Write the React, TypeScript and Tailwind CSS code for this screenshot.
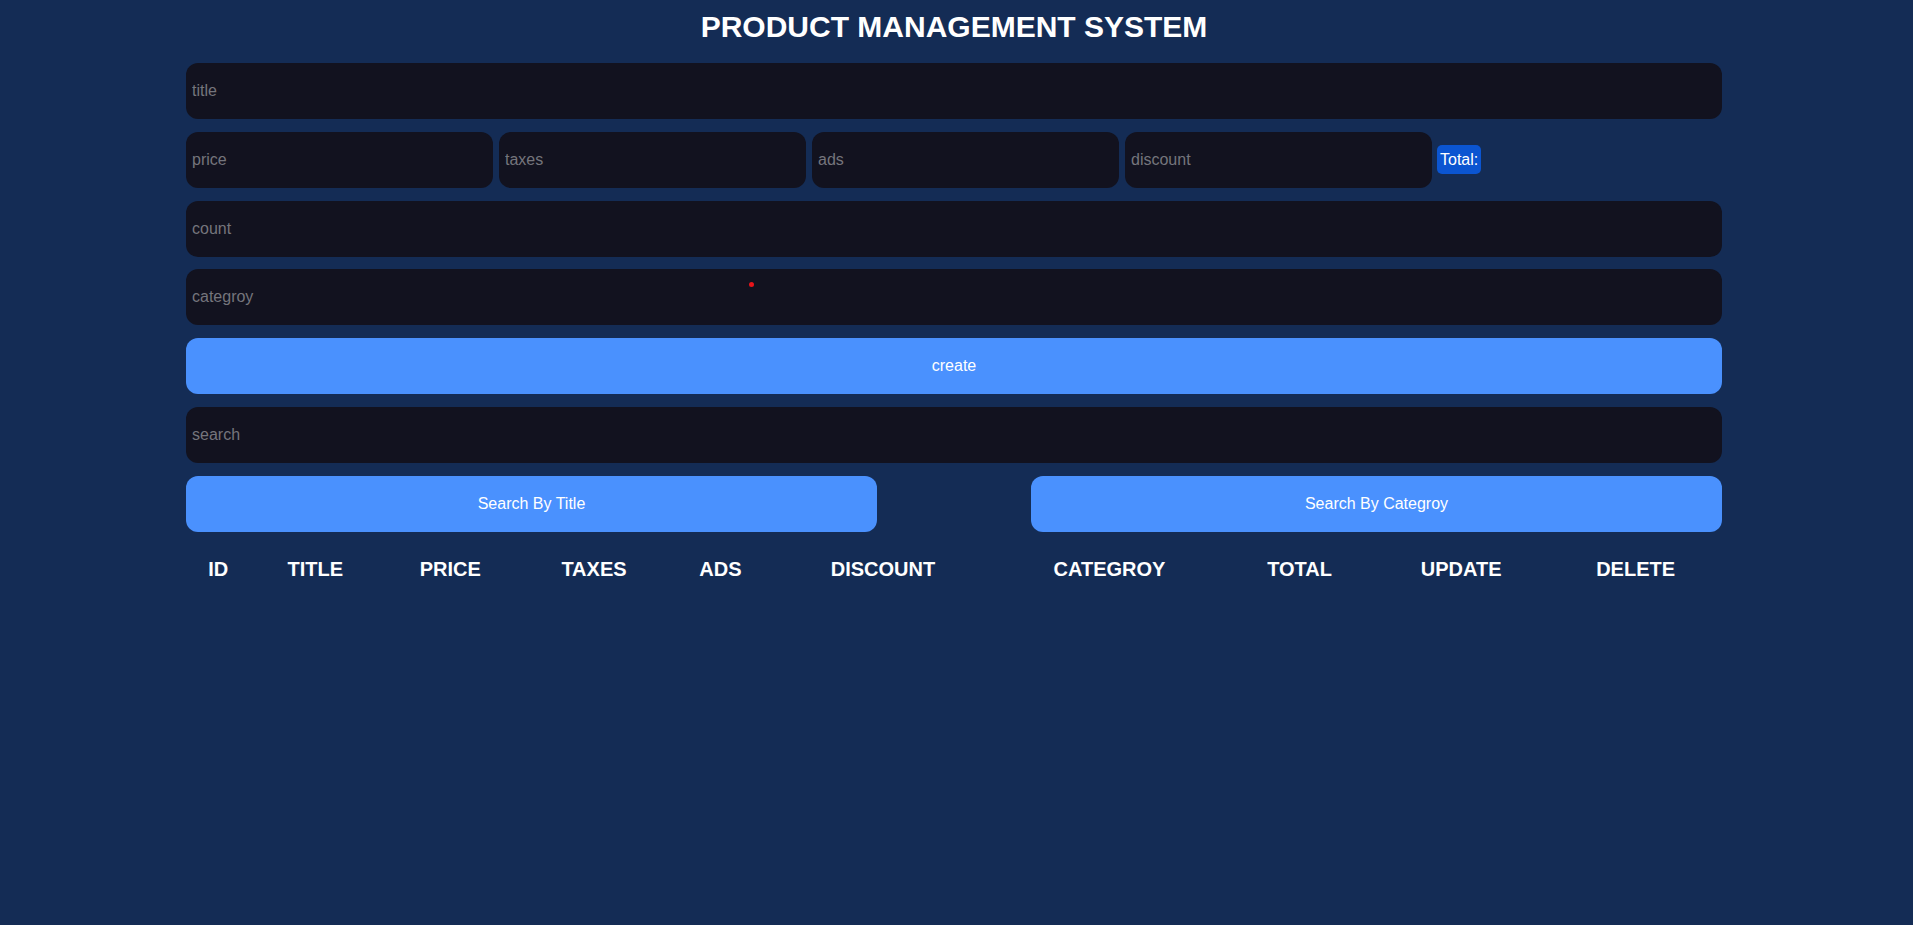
const headers = ["ID", "TITLE", "PRICE", "TAXES", "ADS", "DISCOUNT", "CATEGROY", "TOTAL", "UPDATE", "DELETE"]

const inputCls =
  "h-[56px] rounded-[12px] bg-[#12121f] px-[6px] text-[16px] text-white outline-none placeholder:text-[#75757c]"

export default function App() {
  return (
    <div className="min-h-screen bg-[#142c55] font-['Liberation_Sans',Arial,sans-serif] text-white">
      <div className="pl-[186px]">
        <div className="w-[1536px]">
          <h1 className="pt-[9px] text-center text-[30px] font-bold leading-[36px]">PRODUCT MANAGEMENT SYSTEM</h1>

          <div className="mt-[18px] flex flex-col gap-[12.8px]">
            <input type="text" placeholder="title" className={`${inputCls} w-full`} />

            <div className="flex items-center gap-[6px]">
              <input type="number" placeholder="price" className={`${inputCls} w-[307px]`} />
              <input type="number" placeholder="taxes" className={`${inputCls} w-[307px]`} />
              <input type="number" placeholder="ads" className={`${inputCls} w-[307px]`} />
              <input type="number" placeholder="discount" className={`${inputCls} w-[307px]`} />
              <small className="ml-[-1px] rounded-[5px] bg-[#0b55d1] px-[3px] py-[5px] text-[16px] leading-[19px]">Total:</small>
            </div>

            <input type="number" placeholder="count" className={`${inputCls} w-full`} />

            <div className="relative">
              <input type="text" placeholder="categroy" className={`${inputCls} w-full`} />
              {/* stray red dot */}
              <span className="absolute left-[563px] top-[13px] h-[5px] w-[5px] rounded-full bg-[#e8141a]" />
            </div>

            <button className="h-[56px] w-full rounded-[12px] bg-[#4a91fe] text-[16px] text-white">create</button>

            <input type="text" placeholder="search" className={`${inputCls} w-full`} />

            <div className="flex justify-between">
              <button className="h-[56px] w-[691px] rounded-[12px] bg-[#4a91fe] text-[16px] text-white">Search By Title</button>
              <button className="h-[56px] w-[691px] rounded-[12px] bg-[#4a91fe] text-[16px] text-white">Search By Categroy</button>
            </div>
          </div>

          <table className="mt-[21px] w-full">
            <thead>
              <tr>
                {headers.map((h) => (
                  <th key={h} className="px-[7.5px] py-[5px] text-center text-[20px] font-bold leading-[23px]">
                    {h}
                  </th>
                ))}
              </tr>
            </thead>
            <tbody></tbody>
          </table>
        </div>
      </div>
    </div>
  )
}
